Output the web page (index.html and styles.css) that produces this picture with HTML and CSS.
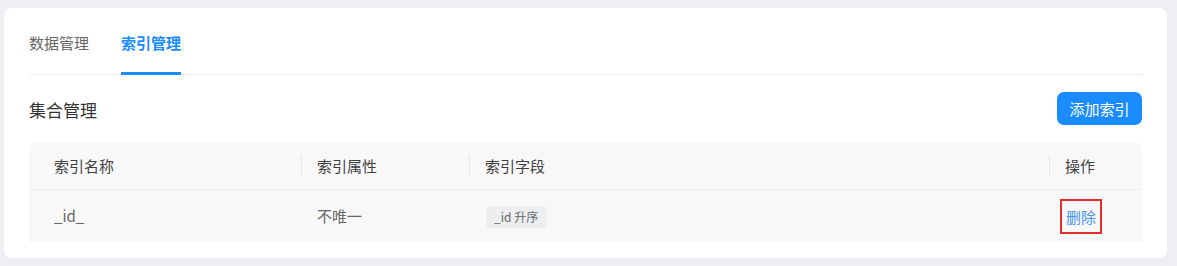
FILE: index.html
```html
<!DOCTYPE html>
<html lang="zh-CN">
<head>
<meta charset="utf-8">
<title>索引管理</title>
<link rel="stylesheet" href="styles.css">
</head>
<body>
<div class="card">
  <div class="tabs">
    <div class="tab">数据管理</div>
    <div class="tab active">索引管理</div>
  </div>
  <div class="section-head">
    <div class="title">集合管理</div>
    <button class="btn-primary">添加索引</button>
  </div>
  <div class="table">
    <div class="row head">
      <div class="cell first">索引名称</div>
      <div class="cell sep">索引属性</div>
      <div class="cell sep">索引字段</div>
      <div class="cell sep">操作</div>
    </div>
    <div class="row body">
      <div class="cell first">_id_</div>
      <div class="cell">不唯一</div>
      <div class="cell"><span class="tag">_id 升序</span></div>
      <div class="cell"><a class="link" href="#">删除</a></div>
    </div>
  </div>
</div>
</body>
</html>
```

FILE: styles.css
```css
* { box-sizing: border-box; }
html, body { margin: 0; }
body {
  background: #eeeff3;
  padding: 8px 10px 8px 4px;
  font-family: "Noto Sans CJK SC", "Noto Sans", sans-serif;
  color: #333;
}
.card {
  background: #fff;
  border-radius: 8px;
  height: 250px;
  padding: 23px 25px 0 25px;
}
.tabs {
  display: flex;
  gap: 32px;
  border-bottom: 1px solid #eeeeee;
}
.tab {
  position: relative;
  font-size: 15px;
  line-height: 24px;
  padding-bottom: 19px;
  color: #666;
}
.tab.active {
  color: #1a8cff;
  font-weight: 700;
}
.tab.active::after {
  content: "";
  position: absolute;
  left: 0;
  right: 0;
  bottom: -1px;
  height: 3px;
  background: #1a8cff;
}
.section-head {
  display: flex;
  align-items: center;
  justify-content: space-between;
  margin-top: 17px;
  height: 33px;
}
.title {
  font-size: 17px;
  color: #333;
  line-height: 24px;
  padding-top: 2px;
}
.btn-primary {
  height: 33px;
  width: 85px;
  border: none;
  border-radius: 7px;
  background: #1a8cff;
  color: #fff;
  font-family: inherit;
  font-size: 15px;
  padding: 0;
  line-height: 33px;
}
.table {
  margin-top: 17px;
  background: #f8f8f9;
  border-radius: 8px 8px 0 0;
}
.row {
  display: grid;
  grid-template-columns: 272px 168px 580px 1fr;
  align-items: center;
  font-size: 15px;
}
.row.head {
  height: 48px;
  border-bottom: 1px solid #ececee;
  color: #3f3f3f;
}
.row.body {
  height: 52px;
  color: #666;
}
.cell {
  padding: 0 16px;
  line-height: 22px;
  position: relative;
}
.cell.first { padding-left: 25px; }
.cell.sep::before {
  content: "";
  position: absolute;
  left: 0;
  top: 0;
  width: 1px;
  height: 22px;
  background: #e6e6e8;
}
.tag {
  display: inline-block;
  height: 22px;
  line-height: 22px;
  padding: 0 9px 0 8px;
  font-size: 12px;
  color: #666;
  background: #eceef0;
  border-radius: 4px;
  margin-left: 1px;
}
.link {
  display: inline-block;
  color: #4a92f0;
  text-decoration: none;
  border: 2px solid #e52d2d;
  padding: 5px 4px 4px 4px;
  margin-left: -5px;
  line-height: 22px;
}
```
